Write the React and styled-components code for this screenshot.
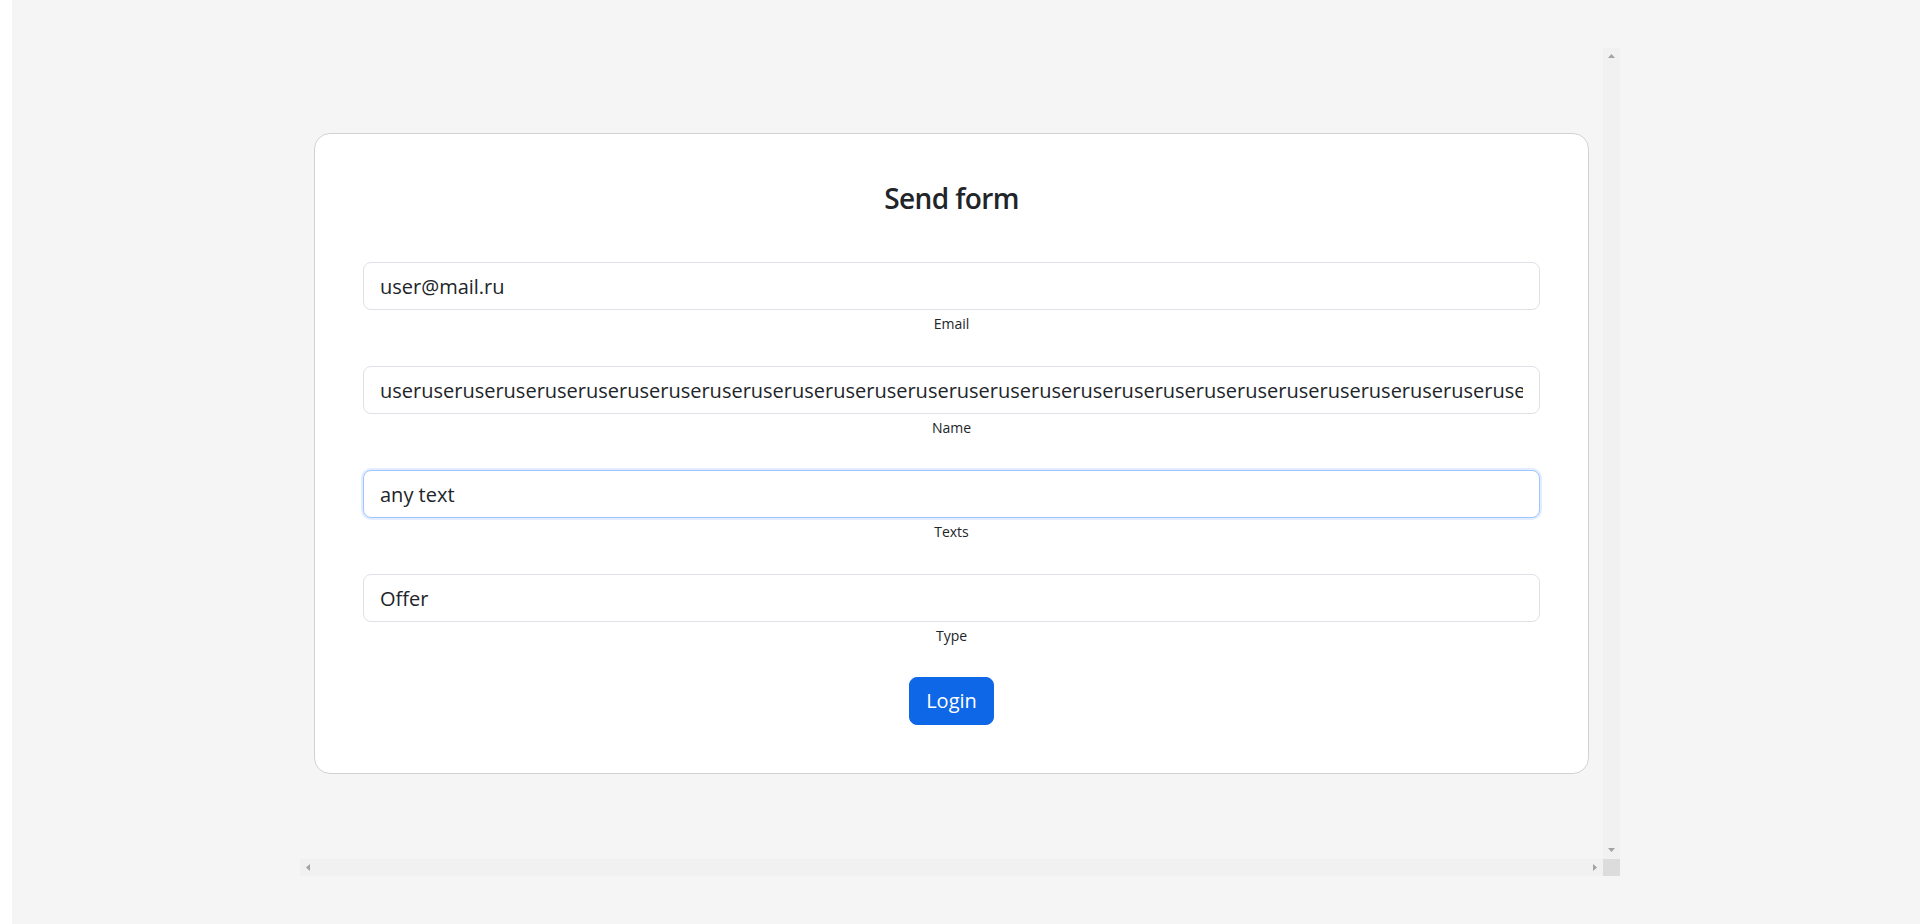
import styled, { createGlobalStyle, css } from "styled-components"

const GlobalStyle = createGlobalStyle`
    * {
        box-sizing: border-box;
    }
    html, body {
        margin: 0;
        height: 100%;
    }
    body {
        background: linear-gradient(to right, #ffffff 12px, #f5f5f5 12px);
        font-family: "Open Sans", "Noto Sans", sans-serif;
        color: #212529;
    }
    #root {
        height: 100%;
    }
`

const Page = styled.div`
    height: 100%;
    padding: 48px 0;
    display: flex;
    justify-content: center;
`

// the frame mimics a box with both scrollbars showing
const Frame = styled.div`
    width: 1320px;
    height: 100%;
    display: grid;
    grid-template-columns: 1fr 17px;
    grid-template-rows: 1fr 17px;
    background: #f5f5f5;
`

const Viewport = styled.div`
    overflow: hidden;
    display: flex;
    flex-direction: column;
    padding: 0 14px;
`

const Track = styled.div`
    background: #f1f1f1;
    display: flex;
    flex-direction: ${(p) => (p.$vertical ? "column" : "row")};
    justify-content: space-between;
`

const Corner = styled.div`
    background: #dcdcdc;
`

const ArrowCell = styled.div`
    width: 17px;
    height: 17px;
    display: flex;
    align-items: center;
    justify-content: center;
    padding: ${(p) => p.$pad};

    svg {
        display: block;
        fill: #a3a3a3;
    }
`

const Arrow = ({ dir }) => {
    if (dir === "up")
        return (
            <ArrowCell $pad="0 0 2px">
                <svg width="7" height="4" viewBox="0 0 7 4"><polygon points="3.5,0 7,4 0,4" /></svg>
            </ArrowCell>
        )
    if (dir === "down")
        return (
            <ArrowCell $pad="0 0 2px">
                <svg width="7" height="4" viewBox="0 0 7 4"><polygon points="0,0 7,0 3.5,4" /></svg>
            </ArrowCell>
        )
    if (dir === "left")
        return (
            <ArrowCell $pad="0 1px 0 0">
                <svg width="4" height="7" viewBox="0 0 4 7"><polygon points="4,0 4,7 0,3.5" /></svg>
            </ArrowCell>
        )
    return (
        <ArrowCell $pad="0 0 0 1px">
            <svg width="4" height="7" viewBox="0 0 4 7"><polygon points="0,0 4,3.5 0,7" /></svg>
        </ArrowCell>
    )
}

const Card = styled.form`
    margin: auto 0;
    background: #ffffff;
    border: 1px solid #d2d2d2;
    border-radius: 16px;
    padding: 48px;
    display: flex;
    flex-direction: column;
    align-items: center;
`

const Title = styled.h3`
    margin: 0 0 47px;
    font-size: 28px;
    font-weight: 600;
    line-height: 1.2;
    letter-spacing: -0.6px;
    color: #212529;
`

const Group = styled.div`
    width: 100%;
    margin-bottom: ${(p) => (p.$last ? 31 : 32)}px;
    display: flex;
    flex-direction: column;
    align-items: center;
`

const Field = styled.input`
    width: 100%;
    height: 48px;
    padding: 8px 16px;
    font-family: inherit;
    font-size: 20px;
    line-height: 1.5;
    color: #212529;
    background: #ffffff;
    border: 1px solid #dee2e6;
    border-radius: 8px;
    outline: none;

    ${(p) =>
        p.$focused &&
        css`
            border-color: #9ec5fe;
            box-shadow: 0 0 0 2px rgba(13, 110, 253, 0.12);
        `}
`

const Hint = styled.div`
    margin-top: 3px;
    font-size: 14px;
    line-height: 1.5;
    color: #212529;
`

const Button = styled.button`
    height: 48px;
    padding: 8px 16px;
    font-family: inherit;
    font-size: 20px;
    line-height: 1.5;
    color: #ffffff;
    background: #0d67e6;
    border: 1px solid #0d67e6;
    border-radius: 8px;
    cursor: pointer;
`

const fields = [
    { label: "Email", value: "user@mail.ru" },
    { label: "Name", value: "user".repeat(45) },
    { label: "Texts", value: "any text", focused: true },
    { label: "Type", value: "Offer" },
]

const App = () => {
    return (
        <>
            <GlobalStyle />
            <Page>
                <Frame>
                    <Viewport>
                        <Card onSubmit={(e) => e.preventDefault()}>
                            <Title>Send form</Title>
                            {fields.map((f, i) => (
                                <Group key={f.label} $last={i === fields.length - 1}>
                                    <Field defaultValue={f.value} $focused={f.focused} />
                                    <Hint>{f.label}</Hint>
                                </Group>
                            ))}
                            <Button type="submit">Login</Button>
                        </Card>
                    </Viewport>
                    <Track $vertical>
                        <Arrow dir="up" />
                        <Arrow dir="down" />
                    </Track>
                    <Track>
                        <Arrow dir="left" />
                        <Arrow dir="right" />
                    </Track>
                    <Corner />
                </Frame>
            </Page>
        </>
    )
}

export default App
